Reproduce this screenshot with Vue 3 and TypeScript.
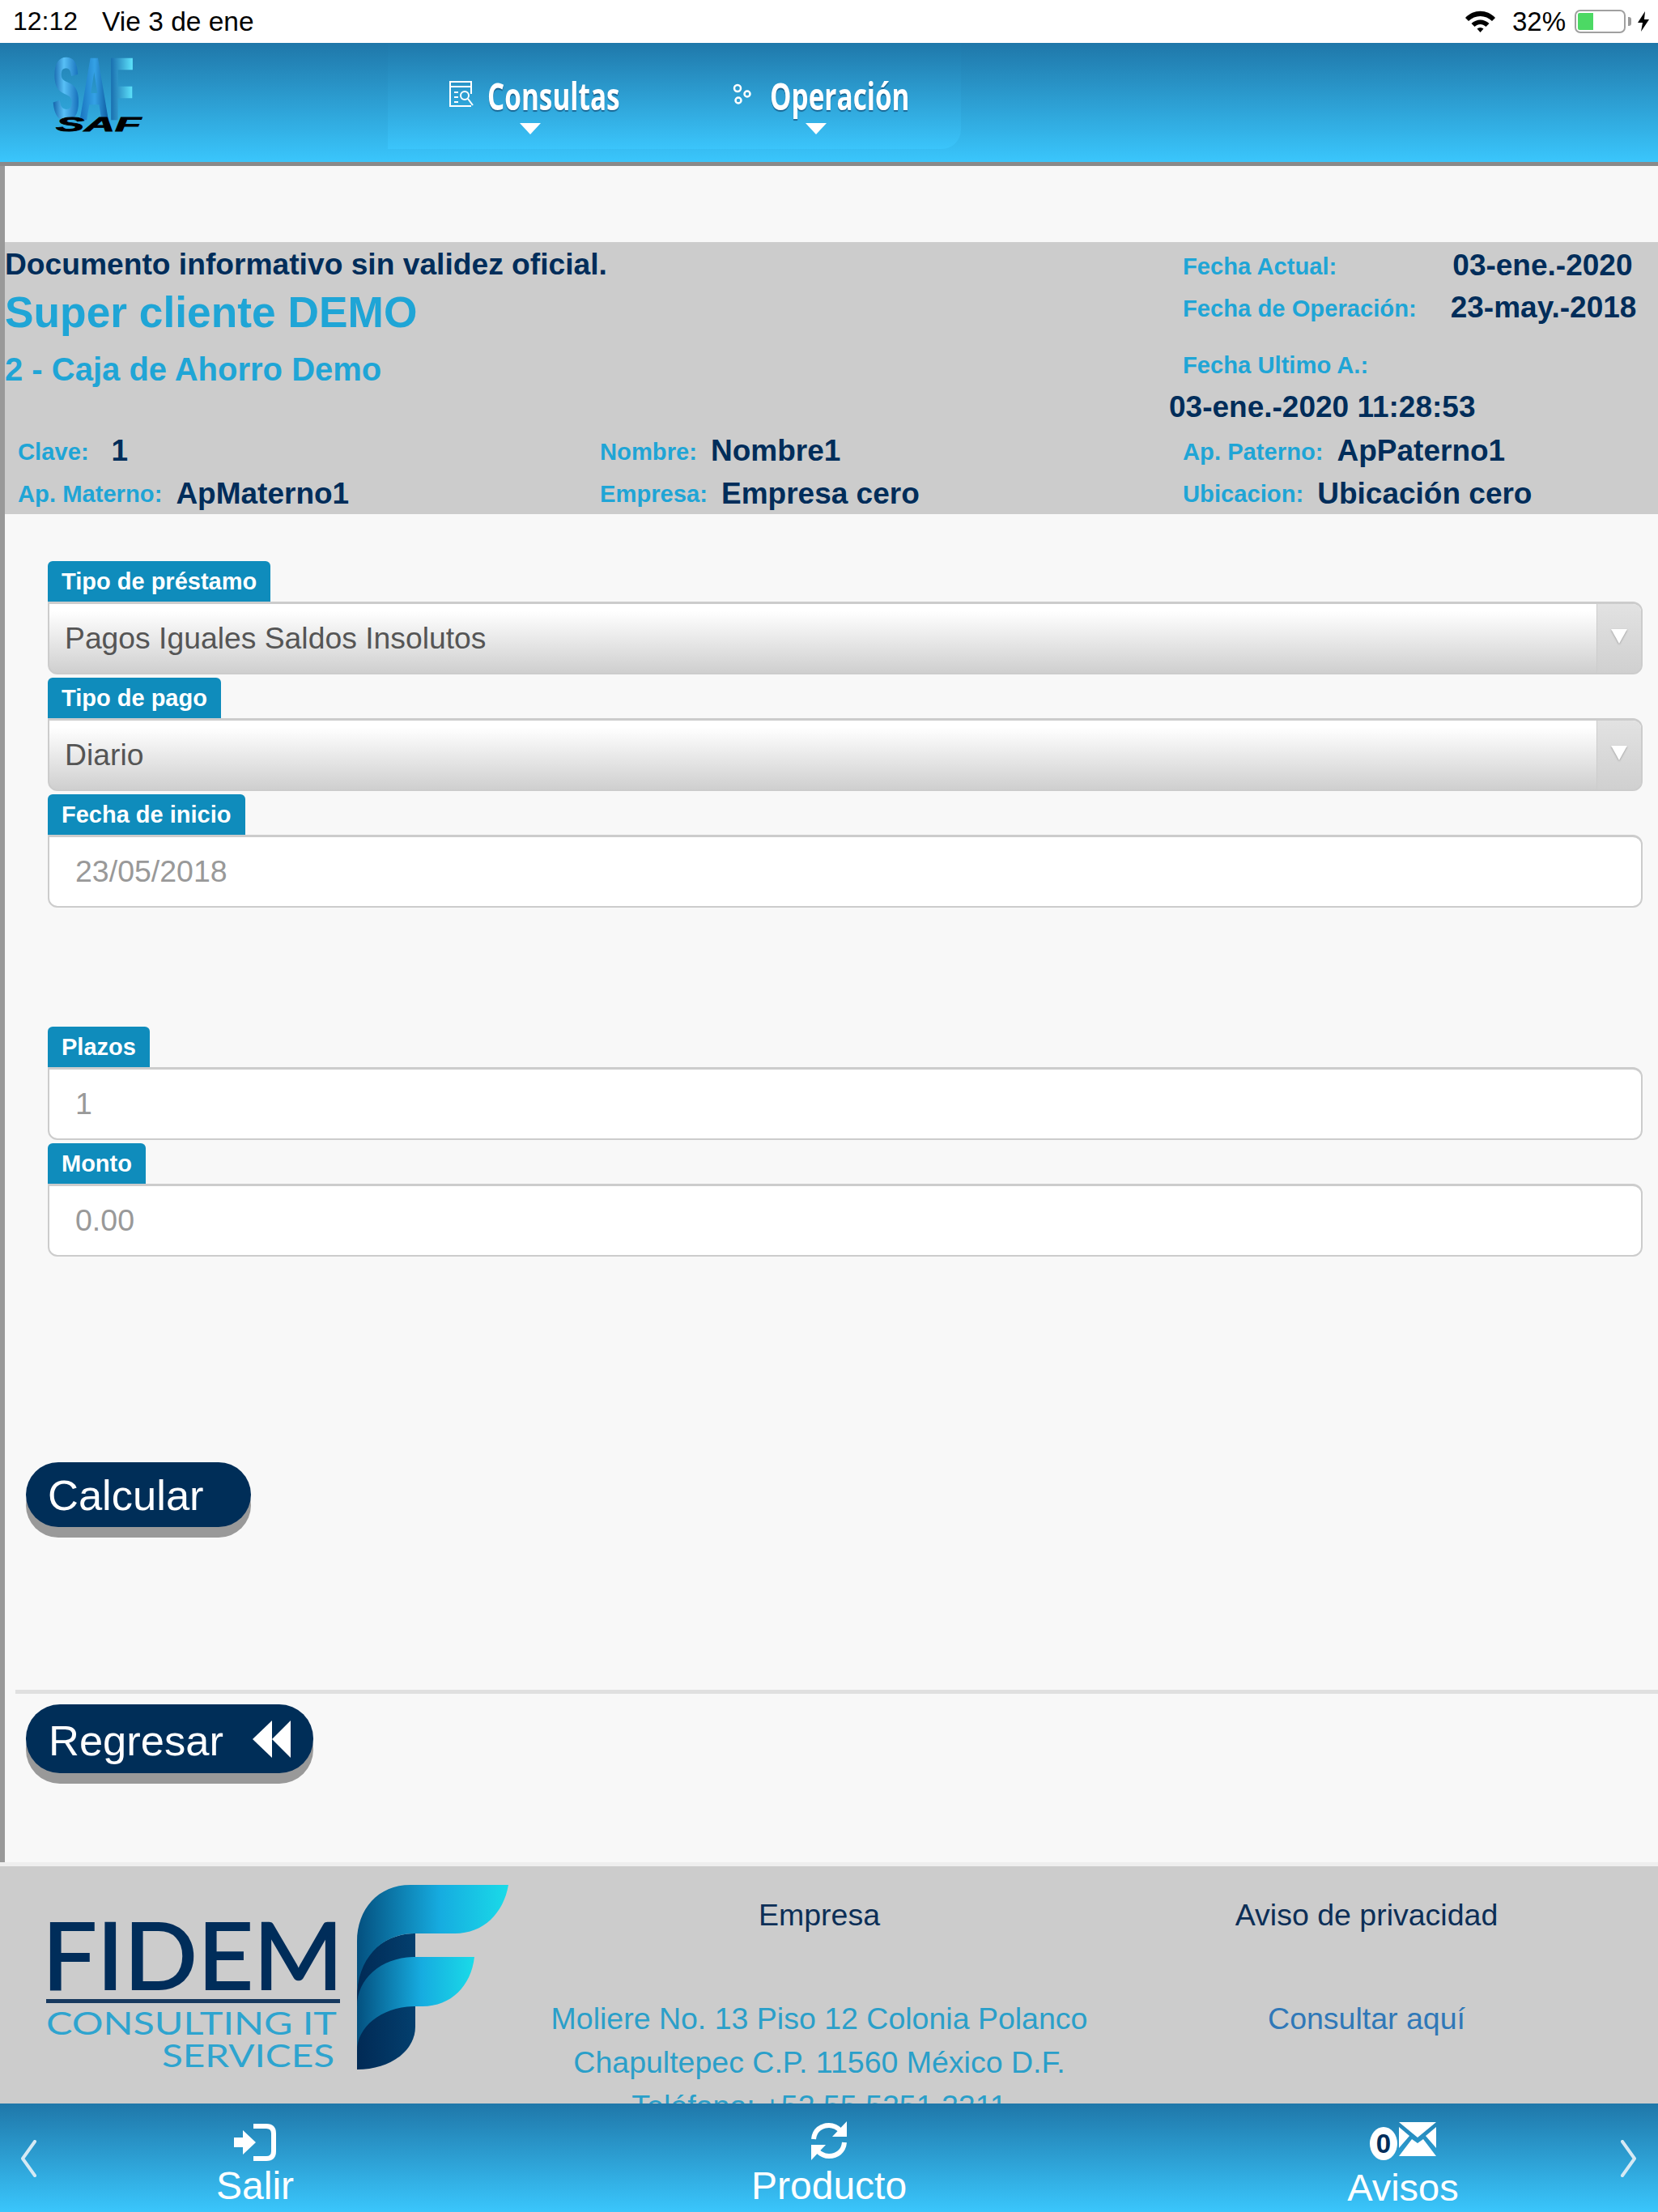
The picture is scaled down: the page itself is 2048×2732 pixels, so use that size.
<script setup lang="ts">
const selects = [
  { label: 'Tipo de préstamo', value: 'Pagos Iguales Saldos Insolutos' },
  { label: 'Tipo de pago', value: 'Diario' },
]
const personRows = [
  [
    { label: 'Clave:', value: '1', spaced: true },
    { label: 'Nombre:', value: 'Nombre1' },
    { label: 'Ap. Paterno:', value: 'ApPaterno1' },
  ],
  [
    { label: 'Ap. Materno:', value: 'ApMaterno1' },
    { label: 'Empresa:', value: 'Empresa cero' },
    { label: 'Ubicacion:', value: 'Ubicación cero' },
  ],
]
</script>

<template>
  <div class="page">
    <div class="status">
      <span class="time">12:12</span>
      <span class="date">Vie 3 de ene</span>
      <svg class="wifi" viewBox="0 0 37 27">
        <path d="M0 9C10 -2 27 -2 37 9L33 13C25 5 12 5 4 13Z" />
        <path d="M7.5 16C14 10 23 10 29.5 16L25.500 20C21 16 16 16 11.500 20Z" />
        <path d="M14.500 22.500C17 20.500 20 20.500 22.500 22.500L18.500 27Z" />
      </svg>
      <span class="pct">32%</span>
      <span class="battery"><i></i></span>
      <span class="nub"></span>
      <svg class="bolt" viewBox="0 0 14 25"><path d="M9 0L0 14H6L4 25L14 10H8Z" /></svg>
    </div>

    <header class="topbar">
      <svg class="saf" viewBox="0 0 110 92">
        <defs>
          <linearGradient id="safFill" x1="0" y1="0" x2="1" y2="0">
            <stop offset="0" stop-color="#1260a8" />
            <stop offset="0.14" stop-color="#58c0f6" />
            <stop offset="0.32" stop-color="#1670bb" />
            <stop offset="0.52" stop-color="#35a2e6" />
            <stop offset="0.68" stop-color="#0f5da3" />
            <stop offset="1" stop-color="#60e8ff" />
          </linearGradient>
        </defs>
        <text class="saf-tall" transform="translate(0 76) scale(1 1.78)" x="0" y="0" textLength="100" lengthAdjust="spacingAndGlyphs">SAF</text>
        <text class="saf-small" x="4" y="91" textLength="105" lengthAdjust="spacingAndGlyphs">SAF</text>
      </svg>
      <nav class="menu">
        <div class="menu-item first">
          <div class="menu-row">
            <svg class="ico-consulta" viewBox="0 0 31 34" fill="none" stroke="#fff" stroke-width="2">
              <path d="M28 17V2H2V32H28" />
              <path d="M2 8H28M7 15H12M7 21H12M7 27H12" />
              <circle cx="20" cy="19" r="5" />
              <path d="M24 23L30 31" />
            </svg>
            <span class="menu-label consultas">Consultas</span>
          </div>
          <i class="tri"></i>
        </div>
        <div class="menu-item second">
          <div class="menu-row">
            <svg class="ico-gears" viewBox="0 0 25 26" fill="none" stroke="#fff" stroke-width="2.500">
              <circle cx="7" cy="6" r="4" />
              <circle cx="19" cy="13" r="3.500" />
              <circle cx="8" cy="21" r="3.500" />
            </svg>
            <span class="menu-label operacion">Operación</span>
          </div>
          <i class="tri"></i>
        </div>
      </nav>
    </header>

    <main class="content">
      <section class="band">
        <div class="band-top">
          <div class="band-left">
            <div class="notice">Documento informativo sin validez oficial.</div>
            <div class="client">Super cliente DEMO</div>
            <div class="caja">2 - Caja de Ahorro Demo</div>
          </div>
          <div class="band-right">
            <div class="date-row"><span class="lbl">Fecha Actual:</span><span class="val actual">03-ene.-2020</span></div>
            <div class="date-row"><span class="lbl">Fecha de Operación:</span><span class="val oper">23-may.-2018</span></div>
            <div class="date-row ultimo"><span class="lbl">Fecha Ultimo A.:</span></div>
            <div class="date-row stamp"><span class="val">03-ene.-2020 11:28:53</span></div>
          </div>
        </div>
        <div v-for="(row, i) in personRows" :key="i" class="person-row">
          <div v-for="cell in row" :key="cell.label" class="person-cell">
            <span class="lbl">{{ cell.label }}</span>
            <span :class="['val', { spaced: cell.spaced }]">{{ cell.value }}</span>
          </div>
        </div>
      </section>

      <form class="form" @submit.prevent>
        <div v-for="s in selects" :key="s.label" class="field">
          <label class="tag">{{ s.label }}</label>
          <div class="select">
            <span class="select-text">{{ s.value }}</span>
            <span class="select-arrow"><i></i></span>
          </div>
        </div>
        <div class="field">
          <label class="tag">Fecha de inicio</label>
          <div class="input">23/05/2018</div>
        </div>
        <div class="field plazos">
          <label class="tag">Plazos</label>
          <div class="input">1</div>
        </div>
        <div class="field">
          <label class="tag">Monto</label>
          <div class="input">0.00</div>
        </div>
      </form>

      <button class="btn calcular" type="button">Calcular</button>
      <div class="divider"></div>
      <button class="btn regresar" type="button">
        Regresar
        <svg class="rewind" viewBox="0 0 47 46"><path d="M24 0V46L0 23Z" /><path d="M47 0V46L24 23Z" /></svg>
      </button>
    </main>

    <footer class="footer">
      <div class="foot-logo">
        <svg class="fidem" viewBox="0 0 572 228">
          <defs>
            <linearGradient id="leaf" x1="0" y1="0" x2="1" y2="0">
              <stop offset="0" stop-color="#04507f" />
              <stop offset="0.55" stop-color="#16ace0" />
              <stop offset="1" stop-color="#1adbe8" />
            </linearGradient>
            <linearGradient id="stem" x1="0" y1="0" x2="1" y2="0">
              <stop offset="0" stop-color="#012a55" />
              <stop offset="1" stop-color="#033f6e" />
            </linearGradient>
          </defs>
          <text class="fidem-name" x="-5" y="129" textLength="372" lengthAdjust="spacingAndGlyphs">FIDEM</text>
          <rect x="0" y="141" width="363" height="5" fill="#17395f" />
          <text class="fidem-sub" x="0" y="185" textLength="359" lengthAdjust="spacingAndGlyphs">CONSULTING IT</text>
          <text class="fidem-sub" x="143" y="225" textLength="213" lengthAdjust="spacingAndGlyphs">SERVICES</text>
          <path fill="url(#stem)" d="M384 228V130C384 90 415 60 456 60V175C456 205 425 228 384 228Z" />
          <path fill="url(#leaf)" d="M384 140V70C384 30 410 0 450 0H571C565 35 540 60 505 60H456C415 60 384 90 384 140Z" />
          <path fill="url(#leaf)" d="M384 205V150C384 115 415 89 456 89H529C525 125 500 150 465 150H456C415 150 384 175 384 205Z" />
        </svg>
      </div>
      <div class="foot-col wide">
        <h4>Empresa</h4>
        <p>Moliere No. 13 Piso 12 Colonia Polanco</p>
        <p>Chapultepec C.P. 11560 México D.F.</p>
        <p>Teléfono: +52 55 5251 2211</p>
      </div>
      <div class="foot-col">
        <h4>Aviso de privacidad</h4>
        <p class="link">Consultar aquí</p>
      </div>
    </footer>

    <div class="bottombar">
      <svg class="chev" viewBox="0 0 20 46" fill="none" stroke="#d5e9f4" stroke-width="4" stroke-linecap="round" stroke-linejoin="round"><path d="M18 2L3 23L18 44" /></svg>
      <div class="tool salir">
        <svg class="ico-salir" viewBox="0 0 52 46">
          <path fill="#fff" d="M0 17H11V8L27 23L11 38V29H0Z" />
          <path fill="none" stroke="#fff" stroke-width="6" d="M24 3H40C46 3 49 6 49 12V34C49 40 46 43 40 43H24" />
        </svg>
        <span>Salir</span>
      </div>
      <div class="tool producto">
        <svg class="ico-sync" viewBox="0 0 46 48" fill="none">
          <path stroke="#fff" stroke-width="6" d="M4 22C5 11 13 5 23 5C29 5 34 8 38 12" />
          <path fill="#fff" d="M45 0V19H27Z" />
          <path stroke="#fff" stroke-width="6" d="M42 26C41 37 33 43 23 43C17 43 12 40 8 36" />
          <path fill="#fff" d="M1 48V29H19Z" />
        </svg>
        <span>Producto</span>
      </div>
      <div class="tool avisos">
        <div class="avisos-icons">
          <span class="badge">0</span>
          <svg class="ico-mail" viewBox="0 0 46 42">
            <path fill="#fff" d="M0 0H46L23 19Z" />
            <path fill="#fff" d="M0 6L13 17L0 32Z" />
            <path fill="#fff" d="M46 6L33 17L46 32Z" />
            <path fill="#fff" d="M0 42L16 21L23 26L30 21L46 42Z" />
          </svg>
        </div>
        <span>Avisos</span>
      </div>
      <svg class="chev right" viewBox="0 0 20 46" fill="none" stroke="#d5e9f4" stroke-width="4" stroke-linecap="round" stroke-linejoin="round"><path d="M2 2L17 23L2 44" /></svg>
    </div>
  </div>
</template>

<style>
html, body {
  margin: 0;
  background: #f8f8f8;
}
</style>

<style scoped>
.page {
  width: 2048px;
  height: 2732px;
  overflow: hidden;
  display: flex;
  flex-direction: column;
  font-family: "Liberation Sans", Arial, sans-serif;
  background: #f8f8f8;
}

.status {
  height: 53px;
  flex: none;
  background: #fff;
  display: flex;
  align-items: center;
  color: #000;
  font-size: 33px;
}
.time { margin-left: 16px; font-size: 32px; }
.date { margin-left: 30px; font-size: 33.500px; }
.wifi { width: 37px; height: 27px; margin-left: auto; }
.pct { margin-left: 21px; }
.battery {
  width: 63px;
  height: 29px;
  margin-left: 11px;
  box-sizing: border-box;
  border: 2px solid #a0a0a0;
  border-radius: 7px;
  padding: 2px;
  display: flex;
}
.battery i { width: 19px; background: #4cd964; border-radius: 2px 0 0 2px; }
.nub { width: 4px; height: 11px; margin-left: 3px; background: #9a9a9a; border-radius: 0 3px 3px 0; }
.bolt { width: 14px; height: 25px; margin-left: 8px; margin-right: 11px; }

.topbar {
  height: 147px;
  flex: none;
  display: flex;
  background: linear-gradient(#1f77a9, #3ac6fc);
  border-bottom: 5px solid #8a8a8a;
}
.saf {
  width: 110px;
  height: 92px;
  margin: 18px 0 0 65px;
  overflow: visible;
}
.saf-tall {
  font: bold 60px "Liberation Sans", sans-serif;
  fill: url(#safFill);
  stroke: url(#safFill);
  stroke-width: 1.5px;
}
.saf-small {
  font: italic bold 23px "Liberation Sans", sans-serif;
  fill: #000;
  stroke: #000;
  stroke-width: 0.8px;
}
.menu {
  width: 708px;
  height: 131px;
  margin-left: 304px;
  padding-left: 75px;
  box-sizing: border-box;
  display: flex;
  gap: 139px;
  background: linear-gradient(#1f78aa, #3bc5fb);
  border-bottom-right-radius: 24px;
}
.menu-item {
  display: flex;
  flex-direction: column;
  align-items: center;
  padding-top: 42px;
}
.menu-row {
  display: flex;
  align-items: flex-start;
}
.ico-consulta { width: 31px; height: 34px; margin: 4px 17px 0 0; }
.ico-gears { width: 25px; height: 26px; margin: 8px 22px 0 0; }
.menu-label {
  display: inline-block;
  height: 52px;
  line-height: 46px;
  font-family: "Open Sans", sans-serif;
  font-weight: 700;
  font-size: 46px;
  color: #fff;
  text-shadow: 0 2px 1px rgba(0, 40, 80, 0.5);
  white-space: nowrap;
  transform-origin: left top;
  transform: scaleX(0.725);
}
.menu-label.consultas { width: 163px; }
.menu-label.operacion { width: 175px; }
.tri {
  width: 0;
  height: 0;
  margin-top: 5px;
  border-left: 13px solid transparent;
  border-right: 13px solid transparent;
  border-top: 14px solid #fff;
}
.first .tri { margin-right: 10px; }
.second .tri { margin-right: 14px; }

.content {
  flex: none;
  height: 2095px;
  box-sizing: border-box;
  border-left: 6px solid #999;
  padding-top: 94px;
}
.band {
  height: 336px;
  background: #ccc;
}
.band-top {
  height: 233px;
  display: flex;
  justify-content: space-between;
}
.notice {
  height: 54px;
  line-height: 54px;
  font-weight: bold;
  font-size: 37.200px;
  color: #002d5a;
}
.client {
  height: 66px;
  line-height: 66px;
  font-weight: bold;
  font-size: 53.300px;
  color: #1fa5d6;
}
.caja {
  height: 74px;
  line-height: 74px;
  font-weight: bold;
  font-size: 40px;
  color: #1fa5d6;
}
.band-right {
  width: 587px;
  padding-top: 4px;
  box-sizing: border-box;
}
.date-row {
  height: 52px;
  display: flex;
  align-items: center;
  white-space: nowrap;
}
.date-row.ultimo { margin-top: 18px; margin-bottom: -1px; }
.date-row.stamp { margin-left: -17px; padding-top: 2px; }
.lbl {
  font-weight: bold;
  font-size: 29.200px;
  color: #1fa5d6;
}
.val {
  font-weight: bold;
  font-size: 37px;
  color: #002d5a;
}
.date-row .val { margin-top: -2px; }
.person-row:nth-child(2) .val { margin-top: -2px; }
.val.spaced { margin-left: 11px; }
.val.actual { margin-left: 143px; }
.val.oper { margin-left: 42px; }

.person-row {
  height: 52px;
  display: grid;
  grid-template-columns: 719px 720px 1fr;
  padding-left: 16px;
}
.person-cell {
  display: flex;
  align-items: center;
  gap: 17px;
  white-space: nowrap;
}

.form {
  padding: 58px 19px 0 53px;
  display: flex;
  flex-direction: column;
  gap: 4px;
}
.field.plazos { margin-top: 143px; }
.tag {
  display: block;
  width: fit-content;
  height: 50px;
  line-height: 50px;
  padding: 0 17px;
  background: #0f8cbc;
  color: #fff;
  font-weight: bold;
  font-size: 29px;
  border-radius: 6px 6px 0 0;
}
.select {
  height: 90px;
  box-sizing: border-box;
  border: 2px solid #ccc;
  border-top-width: 3px;
  border-radius: 0 12px 12px 12px;
  display: flex;
  overflow: hidden;
  background: linear-gradient(#fff 10%, #cfcfcf);
}
.select-text {
  flex: 1;
  padding-left: 19px;
  line-height: 85px;
  font-size: 37.300px;
  color: #555;
}
.select-arrow {
  width: 55px;
  display: flex;
  justify-content: center;
  padding-top: 31px;
  box-sizing: border-box;
  background: linear-gradient(#e2e2e2, #d0d0d0);
  border-left: 1px solid #ccc;
}
.select-arrow i {
  width: 0;
  height: 0;
  border-left: 10px solid transparent;
  border-right: 10px solid transparent;
  border-top: 18px solid #fff;
  filter: drop-shadow(0 1px 1px #999);
}
.input {
  height: 90px;
  box-sizing: border-box;
  border: 2px solid #ccc;
  border-top-width: 3px;
  border-radius: 0 12px 12px 12px;
  background: #fff;
  padding-left: 32px;
  line-height: 84px;
  font-size: 37.500px;
  color: #999;
}

.btn {
  display: flex;
  align-items: center;
  border: none;
  margin: 0 0 0 26px;
  background: #002e58;
  color: #fff;
  font-family: "Liberation Sans", Arial, sans-serif;
  font-size: 52.500px;
  border-radius: 42px;
  box-shadow: 0 13px 0 #999;
}
.calcular {
  height: 80px;
  margin-top: 254px;
  padding: 0 58px 0 27px;
}
.divider {
  height: 5px;
  margin: 201px 0 13px 13px;
  background: #e0e0e0;
}
.regresar {
  height: 85px;
  padding: 4px 28px 0 28px;
}
.rewind {
  width: 47px;
  height: 46px;
  margin: -4px 0 0 36px;
  fill: #fff;
}

.footer {
  height: 298px;
  flex: none;
  box-sizing: border-box;
  display: grid;
  grid-template-columns: 670px 684px 668px;
  border-top: 5px solid #eee;
  background: #ccc;
  overflow: hidden;
}
.foot-logo { padding: 23px 0 0 57px; }
.fidem { width: 572px; height: 228px; display: block; overflow: visible; }
.fidem-name {
  font: 400 114px Lato, sans-serif;
  fill: #002d5a;
  stroke: #002d5a;
  stroke-width: 2px;
}
.fidem-sub {
  font: 400 39px Lato, sans-serif;
  fill: #2ea4cf;
}
.foot-col {
  padding-top: 33px;
  text-align: center;
  font-size: 37.500px;
  line-height: 54px;
}
.foot-col h4 {
  margin: 0 0 74px;
  font-weight: normal;
  font-size: 37.500px;
  color: #0c2f57;
}
.foot-col p {
  margin: 0;
  color: #2a9fc9;
  white-space: nowrap;
}
.foot-col p.link { color: #2f78b8; }

.bottombar {
  height: 134px;
  flex: none;
  display: flex;
  align-items: flex-start;
  background: linear-gradient(#1f77a9, #3ac6fc);
  color: #fff;
  font-size: 48px;
}
.chev {
  width: 20px;
  height: 46px;
  margin: 45px 0 0 25px;
  flex: none;
}
.chev.right { margin: 45px 0 0 auto; margin-right: 26px; }
.tool {
  display: flex;
  flex-direction: column;
  align-items: center;
  line-height: 52px;
}
.salir { margin-left: 222px; padding-top: 25px; }
.ico-salir { width: 52px; height: 46px; margin-bottom: 5px; }
.producto { margin-left: 565px; padding-top: 22px; }
.ico-sync { width: 46px; height: 48px; margin-bottom: 6px; }
.avisos { margin-left: 544px; padding-top: 23px; font-size: 47px; }
.avisos-icons { display: flex; align-items: flex-start; height: 50px; margin-bottom: 5px; }
.badge {
  width: 34px;
  height: 41px;
  margin-top: 6px;
  margin-right: 2px;
  background: #fff;
  border-radius: 50%;
  color: #002d5a;
  font-weight: bold;
  font-size: 33px;
  line-height: 41px;
  text-align: center;
}
.ico-mail { width: 46px; height: 42px; }
</style>
